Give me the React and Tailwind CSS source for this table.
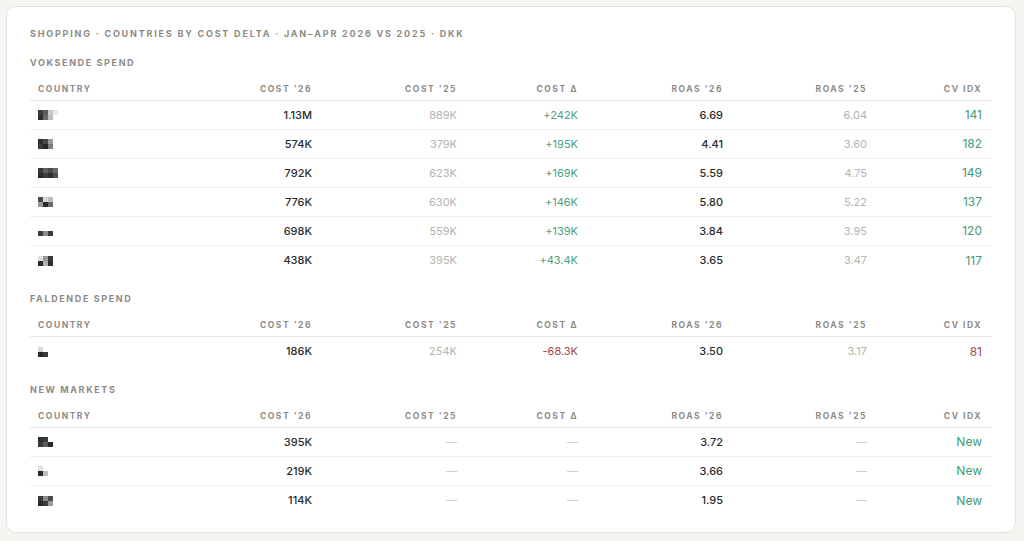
import React from "react";

const COLS = "grid grid-cols-[150px_142px_145px_121px_145px_144px_115px]";

const HEADERS = ["Country", "Cost '26", "Cost '25", "Cost Δ", "Roas '26", "Roas '25", "CV idx"];

// pixelated country names (redacted in the source)
const MOSAICS = {
  a: [["#3a3a3a", "#5a5a5a", "#c9c9c9", "#e8e8e8"], ["#2e2e2e", "#6a6a6a", "#bdbdbd", "#ffffff"]],
  b: [["#2f2f2f", "#4a4a4a", "#9a9a9a", "#ffffff"], ["#3a3a3a", "#2a2a2a", "#7a7a7a", "#ffffff"]],
  c: [["#3a3a3a", "#5e5e5e", "#4a4a4a", "#6a6a6a"], ["#2a2a2a", "#3e3e3e", "#2e2e2e", "#4e4e4e"]],
  d: [["#4a4a4a", "#d8d8d8", "#bdbdbd", "#ffffff"], ["#9a9a9a", "#2a2a2a", "#6a6a6a", "#ffffff"]],
  e: [["#ffffff", "#ffffff", "#ffffff", "#ffffff"], ["#3a3a3a", "#8a8a8a", "#3a3a3a", "#ffffff"]],
  f: [["#e0e0e0", "#9a9a9a", "#3a3a3a", "#ffffff"], ["#2a2a2a", "#b0b0b0", "#2e2e2e", "#ffffff"]],
  g: [["#d8d8d8", "#ffffff", "#ffffff", "#ffffff"], ["#2a2a2a", "#3a3a3a", "#ffffff", "#ffffff"]],
  h: [["#2e2e2e", "#3a3a3a", "#ffffff", "#ffffff"], ["#3a3a3a", "#5a5a5a", "#2a2a2a", "#ffffff"]],
  i: [["#e0e0e0", "#ffffff", "#ffffff", "#ffffff"], ["#2a2a2a", "#c0c0c0", "#ffffff", "#ffffff"]],
  j: [["#3a3a3a", "#8a8a8a", "#4a4a4a", "#ffffff"], ["#2a2a2a", "#3e3e3e", "#9a9a9a", "#ffffff"]],
};

const growing = [
  { c: "a", v: ["1.13M", "889K", "+242K", "6.69", "6.04", "141"] },
  { c: "b", v: ["574K", "379K", "+195K", "4.41", "3.60", "182"] },
  { c: "c", v: ["792K", "623K", "+169K", "5.59", "4.75", "149"] },
  { c: "d", v: ["776K", "630K", "+146K", "5.80", "5.22", "137"] },
  { c: "e", v: ["698K", "559K", "+139K", "3.84", "3.95", "120"] },
  { c: "f", v: ["438K", "395K", "+43.4K", "3.65", "3.47", "117"] },
];

const falling = [{ c: "g", v: ["186K", "254K", "-68.3K", "3.50", "3.17", "81"], down: true }];

const fresh = [
  { c: "h", v: ["395K", "—", "—", "3.72", "—", "New"] },
  { c: "i", v: ["219K", "—", "—", "3.66", "—", "New"] },
  { c: "j", v: ["114K", "—", "—", "1.95", "—", "New"] },
];

const Mosaic = ({ id }) => (
  <div className="flex flex-col">
    {MOSAICS[id].map((row, r) => (
      <div key={r} className="flex">
        {row.map((col, i) => (
          <span key={i} className="block w-[5px] h-[5px]" style={{ backgroundColor: col }} />
        ))}
      </div>
    ))}
  </div>
);

function Row({ row, last }) {
  const [c26, c25, delta, r26, r25, idx] = row.v;
  const dim = (x) => (x === "—" ? "text-[#d0d0cd]" : "text-[#b4b4b1]");
  return (
    <div className={`${COLS} h-[29px] items-center text-[11px] ${last ? "" : "border-b border-[#efefec]"}`}>
      <div className="pl-[8px]">
        <Mosaic id={row.c} />
      </div>
      <div className="text-right pr-[10px] text-[#2b2b2b] font-medium">{c26}</div>
      <div className={`text-right pr-[10px] ${dim(c25)}`}>{c25}</div>
      <div
        className={`text-right pr-[10px] ${
          delta === "—" ? "text-[#d0d0cd]" : row.down ? "text-[#a8474a]" : "text-[#4aa27f]"
        }`}
      >
        {delta}
      </div>
      <div className="text-right pr-[10px] text-[#2b2b2b] font-medium">{r26}</div>
      <div className={`text-right pr-[10px] ${dim(r25)}`}>{r25}</div>
      <div className={`text-right pr-[10px] text-[12px] ${row.down ? "text-[#a8474a]" : "text-[#3f9a76]"}`}>
        {idx}
      </div>
    </div>
  );
}

function Section({ label, rows, className = "" }) {
  return (
    <div className={className}>
      <p className="text-[9px] font-bold uppercase tracking-[0.18em] text-[#8d8b86] leading-none">{label}</p>
      <div className={`${COLS} mt-[17px] pb-[6px] border-b border-[#e7e6e2]`}>
        {HEADERS.map((h, i) => (
          <div
            key={h}
            className={`text-[8.5px] font-bold uppercase tracking-[0.18em] text-[#8d8b86] leading-[10px] ${
              i === 0 ? "pl-[8px]" : "text-right pr-[10px]"
            }`}
          >
            {h}
          </div>
        ))}
      </div>
      {rows.map((r, i) => (
        <Row key={i} row={r} last={i === rows.length - 1} />
      ))}
    </div>
  );
}

export default function App() {
  return (
    <div className="w-[1024px] h-[541px] bg-[#f6f5f1] p-[6px] font-['Inter','Liberation_Sans',sans-serif]">
      <div className="h-[527px] w-[1010px] rounded-[10px] border border-[#e4e2dc] bg-white px-[23px] pt-[22px]">
        <p className="text-[9px] font-bold uppercase tracking-[0.2em] text-[#8d8b86] leading-none">
          Shopping · Countries by cost delta · Jan–Apr 2026 vs 2025 · DKK
        </p>
        <Section label="Voksende spend" rows={growing} className="mt-[20px]" />
        <Section label="Faldende spend" rows={falling} className="mt-[19px]" />
        <Section label="New markets" rows={fresh} className="mt-[19px]" />
      </div>
    </div>
  );
}
